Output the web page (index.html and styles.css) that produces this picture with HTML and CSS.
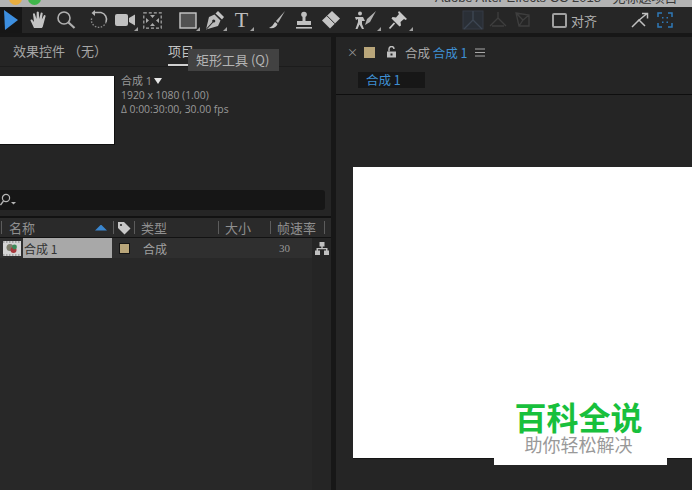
FILE: index.html
```html
<!DOCTYPE html>
<html lang="zh">
<head>
<meta charset="utf-8">
<title>Adobe After Effects CC 2018</title>
<link rel="stylesheet" href="styles.css">
</head>
<body>
<div class="app">
  <header class="titlebar">
    <span class="dot dot-yellow"></span>
    <span class="dot dot-green"></span>
    <span class="title">Adobe After Effects CC 2018 - 无标题项目</span>
  </header>

  <nav class="toolbar">
    <div class="group">
      <div class="tool tool-active"><svg width="16" height="22" viewBox="0 0 16 22"><path d="M1 1 L15 11 L2 21 Z" fill="#3d8fe0"/></svg></div>
      <div class="tool"><svg width="20" height="20" viewBox="0 0 20 20"><path d="M5 18 L1.5 10.5 Q1.5 9 3 9.5 L5 12 L4 4 Q4.5 2.8 5.7 3.6 L7.5 9 L7.7 2 Q8.7 .8 9.8 2 L10.2 9 L11.8 2.8 Q13 2 13.7 3.2 L12.8 9.5 L15 5.2 Q16.3 4.8 16.6 6 L14.5 14 Q14 17 12.8 18 Z" fill="#c4c4c4"/></svg></div>
      <div class="tool"><svg width="20" height="20" viewBox="0 0 20 20"><circle cx="8" cy="8" r="6" fill="none" stroke="#b0b0b0" stroke-width="1.6"/><path d="M12.5 12.5 L18.5 18" stroke="#b0b0b0" stroke-width="2.2"/></svg></div>
    </div>
    <div class="group group-b">
      <div class="tool"><svg width="20" height="20" viewBox="0 0 20 20"><path d="M6 2.5 H12 A7 7 0 0 1 17 12" fill="none" stroke="#b5b5b5" stroke-width="1.6"/><path d="M6 0 L2.5 3 L6 6 Z" fill="#b5b5b5"/><path d="M17 12 A7.5 7.5 0 0 1 3 13 A7 7 0 0 1 3.2 7" fill="none" stroke="#8a8a8a" stroke-width="1.4" stroke-dasharray="1.5 1.5"/></svg></div>
      <div class="tool"><svg width="21" height="16" viewBox="0 0 21 16"><rect x="0" y="2" width="13" height="12" rx="2" fill="#c0c0c0"/><path d="M14 6 L20 2.5 V13.5 L14 10 Z" fill="#c0c0c0"/></svg><i class="corner"></i></div>
      <div class="tool"><svg width="19" height="17" viewBox="0 0 19 17"><g fill="none" stroke="#aaa" stroke-width="1.2" stroke-dasharray="3 2"><rect x=".8" y=".8" width="17.4" height="15.4"/></g><path d="M7 3 H12 L9.5 6 Z M7 14 H12 L9.5 11 Z M3 6 V11 L6 8.5 Z M16 6 V11 L13 8.5 Z" fill="#aaa"/></svg></div>
    </div>
    <div class="group group-c">
      <div class="tool"><svg width="18" height="17" viewBox="0 0 18 17"><rect x="1" y="1" width="16" height="15" fill="#525252" stroke="#c8c8c8" stroke-width="1.4"/></svg><i class="corner"></i></div>
      <div class="tool"><svg width="20" height="20" viewBox="0 0 20 20"><path d="M13 1 L19 7 L17 9.5 L10.5 3.5 Z" fill="#c4c4c4"/><path d="M9.5 4.5 L15.5 10.5 L13 16 L1 19.5 L4 7 Z" fill="#bcbcbc"/><path d="M1.5 19 L8 12" stroke="#262626" stroke-width="1.1"/><circle cx="8.7" cy="11" r="1.6" fill="#262626"/></svg><i class="corner"></i></div>
      <div class="tool"><span class="tool-t">T</span><i class="corner"></i></div>
    </div>
    <div class="group group-c">
      <div class="tool"><svg width="20" height="20" viewBox="0 0 20 20"><path d="M18 1 L9 11 L11 13 Z" fill="#b5b5b5"/><path d="M8 12 L10.5 14 Q9 19 2 18 Q6 16 8 12 Z" fill="#c5c5c5"/></svg></div>
      <div class="tool"><svg width="20" height="19" viewBox="0 0 20 19"><circle cx="10" cy="3.5" r="2.8" fill="#c0c0c0"/><path d="M8.5 6 H11.5 V10 H17 V14 H3 V10 H8.5 Z" fill="#c0c0c0"/><rect x="2" y="16" width="16" height="1.6" fill="#c0c0c0"/></svg></div>
      <div class="tool"><svg width="20" height="20" viewBox="0 0 20 20"><path d="M11 1 L19 8.5 L9 18.5 L1 10.5 Z" fill="#c4c4c4"/><path d="M6 5.8 L14 13.8" stroke="#262626" stroke-width="1"/></svg></div>
    </div>
    <div class="group group-e">
      <div class="tool tool-wide"><svg width="24" height="20" viewBox="0 0 24 20"><circle cx="6" cy="3.5" r="2" fill="#c0c0c0"/><path d="M1 7 H9 L11 11 L8 11 L8 14 L10 19 H8 L5.5 14.5 L3.5 19 H1.5 L4 12 V9 L2 10 Z" fill="#c0c0c0"/><path d="M22 1 L13 9 L11 15 L16 12 Z" fill="#b0b0b0"/></svg><i class="corner"></i></div>
      <div class="tool tool-wide"><svg width="20" height="20" viewBox="0 0 20 20"><path d="M11 1 L19 9 L17.5 10 L16 9 L12.5 12 L13 15.5 L11.5 16.5 L3.5 8.5 L4.5 7 L8 7.5 L11 4 L10 2.5 Z" fill="#c8c8c8"/><path d="M6.5 13 L1.5 18.5" stroke="#c8c8c8" stroke-width="1.8"/></svg><i class="corner"></i></div>
    </div>
    <div class="group group-f">
      <div class="tool tool-axis"><svg width="24" height="22" viewBox="0 0 24 22"><rect x="2" y="2" width="20" height="18" fill="#2a2f36" stroke="#343b45"/><path d="M12 11 V2 M12 11 L3 20 M12 11 L21 20" stroke="#3d4652" stroke-width="1.4"/></svg></div>
      <div class="tool tool-axis"><svg width="20" height="18" viewBox="0 0 20 18"><path d="M10 7 V1 M10 7 L2 15 M10 7 L18 15 M4 15 H16" stroke="#3e3e3e" stroke-width="1.3" fill="none"/></svg></div>
      <div class="tool tool-axis"><svg width="18" height="18" viewBox="0 0 18 18"><path d="M2 2 L15 4 L15 15 L5 15 Z M2 2 L9 9 L15 4 M9 9 L5 15" stroke="#3e3e3e" stroke-width="1.3" fill="none"/></svg></div>
    </div>
    <label class="align"><span class="check"></span><span>对齐</span></label>
    <div class="tool tool-snap-a"><svg width="18" height="17" viewBox="0 0 18 17"><path d="M1 15 L8 8 L14 14" fill="none" stroke="#c0c0c0" stroke-width="1.5"/><path d="M7 9 L16 1.5 M11 1.5 H16.5 V6.5" fill="none" stroke="#c0c0c0" stroke-width="1.5"/></svg></div>
    <div class="tool tool-snap-b"><svg width="16" height="16" viewBox="0 0 16 16"><path d="M1 5 V1 H5 M11 1 H15 V5 M15 11 V15 H11 M5 15 H1 V11" fill="none" stroke="#2f79b8" stroke-width="1.5"/><path d="M5 5 H6.5 V6.5 H5 Z M9.5 5 H11 V6.5 H9.5 Z M5 9.5 H6.5 V11 H5 Z M9.5 9.5 H11 V11 H9.5 Z" fill="#2f79b8"/></svg></div>
  </nav>

  <main class="panels">
    <section class="panel panel-project">
      <div class="tabs">
        <span class="tab">效果控件 （无）</span>
        <span class="tab tab-active">项目</span>
      </div>
      <div class="summary">
        <div class="thumb"></div>
        <div class="meta">
          <div class="meta-name">合成 1<i class="caret"></i></div>
          <div>1920 x 1080 (1.00)</div>
          <div><span class="delta">Δ</span> 0:00:30:00, 30.00 fps</div>
        </div>
      </div>
      <div class="search">
        <svg width="18" height="14" viewBox="0 0 18 14"><circle cx="6" cy="5" r="3.6" fill="none" stroke="#b5b5b5" stroke-width="1.2"/><path d="M3.5 8 L.5 12" stroke="#b5b5b5" stroke-width="1.3"/><path d="M11 9 H16 L13.5 11.5 Z" fill="#b5b5b5"/></svg>
      </div>
      <div class="table">
        <div class="thead">
          <div class="cell cell-name"><span>名称</span><i class="sort"></i></div>
          <div class="cell cell-label"><svg width="14" height="14" viewBox="0 0 14 14"><path d="M1 1 H7 L13.5 7.5 L7.5 13.5 L1 7 Z" fill="#c8c8c8"/><circle cx="4" cy="4" r="1.1" fill="#2b2b2b"/></svg></div>
          <div class="cell">类型</div>
          <div class="cell">大小</div>
          <div class="cell cell-end">帧速率</div>
        </div>
        <div class="tbody">
          <div class="rows">
            <div class="trow">
              <div class="cell-item">
                <svg width="18" height="15" viewBox="0 0 18 15"><rect width="18" height="15" fill="#d5d5d5"/><path d="M0 1 H18 M0 14 H18" stroke="#777" stroke-dasharray="1.5 1.5"/><circle cx="7" cy="6.5" r="3.5" fill="#7d7d6b"/><circle cx="10.5" cy="9" r="3" fill="#a8383c"/><circle cx="11.5" cy="6" r="2.4" fill="#3c8a58"/></svg>
                <span class="item-name">合成 1</span>
              </div>
              <div class="cell-swatch"><i class="swatch swatch-small"></i></div>
              <div class="cell-type">合成</div>
              <div></div>
              <div class="cell-fps">30</div>
            </div>
          </div>
          <div class="flow">
            <svg width="14" height="13" viewBox="0 0 14 13"><path d="M4.5 0 H9.5 V4.5 H7.7 V6 H12.5 V8.5 H14 V13 H9 V8.5 H11 V7.2 H3 V8.5 H5 V13 H0 V8.5 H1.5 V6 H6.3 V4.5 H4.5 Z" fill="#c0c0c0"/></svg>
          </div>
        </div>
      </div>
    </section>

    <section class="panel panel-comp">
      <div class="comp-tabs">
        <span class="close">×</span>
        <i class="swatch"></i>
        <svg class="lock" width="11" height="12" viewBox="0 0 11 12"><path d="M3 5.5 V3 A2.5 2.5 0 0 1 8 3" fill="none" stroke="#c0c0c0" stroke-width="1.4"/><rect x="1" y="5.5" width="9" height="6" fill="#c0c0c0"/><rect x="4.5" y="7.5" width="2" height="2" fill="#252525"/></svg>
        <span class="comp-title">合成 <b class="accent">合成 1</b></span>
        <svg width="10" height="9" viewBox="0 0 10 9"><path d="M0 1 H10 M0 4.5 H10 M0 8 H10" stroke="#a8a8a8" stroke-width="1.1"/></svg>
      </div>
      <div class="crumbs"><span class="crumb">合成 1</span></div>
      <div class="viewer">
        <div class="canvas"></div>
      </div>
    </section>
  </main>

  <div class="tooltip">矩形工具 (Q)</div>
  <aside class="watermark">
    <div class="wm-title">百科全说</div>
    <div class="wm-sub">助你轻松解决</div>
  </aside>
</div>
</body>
</html>
```
FILE: styles.css
```css
* { box-sizing: border-box; }
html, body { margin: 0; padding: 0; }
body {
  width: 692px;
  height: 490px;
  overflow: hidden;
  background: #171717;
  font-family: "Noto Sans CJK SC", "Noto Sans", sans-serif;
  color: #a6a6a6;
}
.app {
  position: relative;
  width: 692px;
  height: 490px;
  display: flex;
  flex-direction: column;
  overflow: hidden;
}

/* title bar */
.titlebar {
  flex: 0 0 7px;
  height: 7px;
  display: flex;
  background: #b3b3b3;
  overflow: hidden;
}
.dot {
  flex: none;
  width: 13px;
  height: 13px;
  border-radius: 50%;
  margin-top: -8px;
}
.dot-yellow { background: #e9ae3f; margin-left: 9px; }
.dot-green { background: #3fb54a; margin-left: 6px; }
.title {
  margin-left: 394px;
  margin-top: -10px;
  font-family: "Liberation Sans", "Noto Sans CJK SC", sans-serif;
  font-size: 13px;
  line-height: 16px;
  white-space: nowrap;
  color: #3a3a3a;
}

/* tool bar */
.toolbar {
  flex: 0 0 26px;
  display: flex;
  align-items: center;
  background: #262626;
}
.group { display: flex; height: 26px; }
.group-b { margin-left: 6px; }
.group-c { margin-left: 8px; }
.group-e { margin-left: 6px; }
.group-f { margin-left: 46px; }
.tool {
  position: relative;
  flex: none;
  width: 27px;
  height: 26px;
  display: flex;
  align-items: center;
  justify-content: center;
}
.tool-active {
  width: 22px;
  margin-right: 3px;
  background: #161616;
}
.tool-wide { width: 32px; }
.tool-axis { width: 25px; }
.tool-snap-a { margin-left: 29px; }
.tool-snap-b { margin-left: -2px; }
.tool-t {
  font-family: "Liberation Serif", serif;
  font-size: 22px;
  line-height: 26px;
  color: #bdbdbd;
}
.corner {
  position: absolute;
  right: 1px;
  bottom: 2px;
  width: 0;
  height: 0;
  border-left: 4px solid transparent;
  border-bottom: 4px solid #a0a0a0;
}
.align {
  display: flex;
  align-items: center;
  gap: 4px;
  margin-left: 17px;
  font-size: 13px;
  color: #b0b0b0;
}
.check {
  width: 15px;
  height: 15px;
  border: 2px solid #a0a0a0;
  border-radius: 2px;
}

/* panels */
.panels {
  flex: 1;
  min-height: 0;
  display: grid;
  grid-template-columns: 331px 356px;
  column-gap: 5px;
  margin-top: 4px;
}
.panel {
  min-width: 0;
  background: #252525;
  display: flex;
  flex-direction: column;
}

/* project panel */
.tabs {
  height: 29px;
  flex: none;
  display: flex;
  align-items: flex-start;
  padding: 4px 0 0 13px;
}
.tab {
  font-size: 13px;
  line-height: 19px;
  color: #a6a6a6;
  white-space: pre;
}
.tab-active {
  margin-left: 61px;
  height: 25px;
  width: 22px;
  color: #c4c4c4;
  border-bottom: 2px solid #d0d0d0;
}
.summary {
  flex: none;
  height: 124px;
  display: flex;
  align-items: flex-start;
  padding-top: 9px;
  border-top: 1px solid #1c1c1c;
}
.thumb {
  flex: none;
  width: 115px;
  height: 69px;
  background: #fff;
  border-right: 1px solid #111;
  border-bottom: 1px solid #111;
}
.meta {
  margin-left: 6px;
  margin-top: -3px;
  font-family: "Open Sans", "Noto Sans CJK SC", sans-serif;
  font-size: 10.4px;
  line-height: 14px;
  color: #999;
  white-space: nowrap;
}
.meta-name { font-size: 11px; display: flex; align-items: center; height: 15px; }
.caret {
  margin-left: 2px;
  width: 0;
  height: 0;
  border-left: 4px solid transparent;
  border-right: 4px solid transparent;
  border-top: 6px solid #e6e6e6;
}
.delta { font-size: 10px; }
.search {
  flex: none;
  height: 20px;
  width: 325px;
  display: flex;
  align-items: center;
  background: #161616;
  border-radius: 0 3px 3px 0;
}
.table {
  flex: 1;
  min-height: 0;
  margin-top: 6px;
  display: flex;
  flex-direction: column;
  border-top: 2px solid #121212;
}
.thead {
  flex: none;
  height: 19px;
  display: grid;
  grid-template-columns: 114px 21px 84px 52px 54px;
  align-items: center;
  background: #2a2a2a;
  font-size: 13px;
  line-height: 19px;
  color: #8f8f8f;
}
.cell {
  height: 13px;
  display: flex;
  align-items: center;
  padding-left: 6px;
  border-right: 1px solid #5c5c5c;
}
.cell-name {
  padding-left: 7px;
  justify-content: space-between;
  padding-right: 6px;
  border-left: 1px solid #5c5c5c;
  margin-left: 1px;
}
.cell-label { padding-left: 3px; }
.cell-end { padding-left: 6px; }
.sort {
  width: 12px;
  height: 6px;
  background: #3a86cf;
  clip-path: polygon(50% 0, 100% 100%, 0 100%);
}
.tbody {
  flex: 1;
  min-height: 0;
  display: grid;
  grid-template-columns: 312px 19px;
  border-top: 1px solid #121212;
  background: #252525;
}
.rows { background: #282828; }
.trow {
  height: 20px;
  display: grid;
  grid-template-columns: 114px 21px 136px 0 41px;
  align-items: center;
  background: #2f2f2f;
  font-size: 12px;
}
.cell-item {
  display: flex;
  align-items: center;
  gap: 2px;
  height: 20px;
  padding-left: 3px;
  width: 112px;
}
.item-name {
  flex: 1;
  height: 20px;
  line-height: 21px;
  padding-left: 1px;
  background: #a8a8a8;
  color: #333;
}
.cell-swatch { display: flex; padding-left: 5px; }
.swatch {
  flex: none;
  width: 11px;
  height: 11px;
  background: #b9a67a;
}
.swatch-small {
  width: 11px;
  height: 11px;
  border: 1px solid #151515;
}
.cell-type { padding-left: 8px; color: #a0a0a0; }
.cell-fps {
  padding-left: 8px;
  font-family: "Liberation Serif", serif;
  font-size: 11px;
  color: #999;
}
.flow { display: flex; justify-content: center; padding: 4px 0 0 0; }

/* composition panel */
.comp-tabs {
  flex: none;
  height: 30px;
  display: flex;
  align-items: center;
  padding-left: 11px;
}
.close { font-size: 11px; width: 17px; color: #999; }
.lock { margin-left: 11px; }
.comp-title {
  margin-left: 8px;
  margin-right: 7px;
  font-size: 12.5px;
  color: #a6a6a6;
}
.accent { font-weight: 400; color: #3f8fd2; }
.crumbs {
  flex: none;
  height: 28px;
  padding: 5px 0 0 22px;
  border-bottom: 1px solid #0e0e0e;
}
.crumb {
  display: block;
  width: 67px;
  height: 16px;
  padding-left: 8px;
  background: #171717;
  font-size: 12.5px;
  line-height: 16px;
  color: #3f8fd2;
}
.viewer {
  flex: 1;
  min-height: 0;
  padding: 72px 0 0 17px;
  overflow: hidden;
}
.canvas {
  width: 400px;
  height: 292px;
  background: #fff;
  border-bottom: 1px solid #151515;
}

/* overlays */
.tooltip {
  position: absolute;
  left: 188px;
  top: 49px;
  width: 91px;
  height: 22px;
  padding-left: 8px;
  background: #424242;
  font-size: 13px;
  line-height: 22px;
  color: #b4b4b4;
  white-space: nowrap;
}
.watermark {
  position: absolute;
  left: 494px;
  top: 398px;
  width: 173px;
  height: 67px;
  padding: 1px 4px 0 0;
  background: #fff;
  text-align: center;
}
.wm-title {
  font-size: 32px;
  font-weight: 700;
  line-height: 34px;
  color: #18c03c;
}
.wm-sub {
  font-size: 18px;
  line-height: 22px;
  color: #999;
}
```
